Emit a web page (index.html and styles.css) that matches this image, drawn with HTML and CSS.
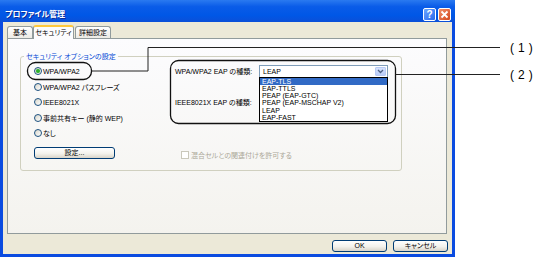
FILE: index.html
```html
<!DOCTYPE html>
<html lang="ja">

<head>
  <meta charset="UTF-8" />
  <title>プロファイル管理</title>
  <link rel="stylesheet" href="styles.css">
</head>

<body>
  <div class="window">
    <div class="titlebar">
      <span class="title">プロファイル管理</span>
      <div class="caption-buttons">
        <span class="cap-btn help">?</span>
        <span class="cap-btn close">
          <svg width="9" height="9" viewBox="0 0 9 9">
            <path d="M1.5 1.5 L7.5 7.5 M7.5 1.5 L1.5 7.5" stroke="#fff" stroke-width="1.8" />
          </svg>
        </span>
      </div>
    </div>

    <div class="client">
      <div class="tabs">
        <span class="tab tab-basic">基本</span>
        <span class="tab tab-security active">セキュリティ</span>
        <span class="tab tab-detail">詳細設定</span>
      </div>

      <div class="panel">
        <fieldset class="group">
          <legend>セキュリティ オプションの設定</legend>
          <div class="group-body">
            <div class="options">
              <label class="radio checked"><span class="radio-dot"></span>WPA/WPA2</label>
              <label class="radio"><span class="radio-dot"></span>WPA/WPA2 パスフレーズ</label>
              <label class="radio"><span class="radio-dot"></span>IEEE8021X</label>
              <label class="radio"><span class="radio-dot"></span>事前共有キー (静的 WEP)</label>
              <label class="radio"><span class="radio-dot"></span>なし</label>
              <button class="btn setting">設定...</button>
            </div>

            <div class="eap">
              <div class="eap-row">
                <span class="eap-label">WPA/WPA2 EAP の種類:</span>
                <div class="select">
                  <span>LEAP</span>
                  <span class="select-arrow">
                    <svg width="7" height="5" viewBox="0 0 7 5">
                      <path d="M1 1 L3.5 3.5 L6 1" fill="none" stroke="#4d6185" stroke-width="1.3" />
                    </svg>
                  </span>
                  <ul class="dropdown">
                    <li class="selected">EAP-TLS</li>
                    <li>EAP-TTLS</li>
                    <li>PEAP (EAP-GTC)</li>
                    <li>PEAP (EAP-MSCHAP V2)</li>
                    <li>LEAP</li>
                    <li>EAP-FAST</li>
                  </ul>
                </div>
              </div>
              <div class="eap-row second">
                <span class="eap-label">IEEE8021X EAP の種類:</span>
                <div class="select"></div>
              </div>
              <label class="check disabled"><span class="check-box"></span>混合セルとの関連付けを許可する</label>
            </div>
          </div>
        </fieldset>
      </div>

      <div class="footer">
        <button class="btn">OK</button>
        <button class="btn">キャンセル</button>
      </div>
    </div>
  </div>

  <svg class="callouts" width="546" height="262" viewBox="0 0 546 262">
    <rect x="27.5" y="62.5" width="64" height="17" rx="8" fill="none" stroke="#111" stroke-width="1.3" />
    <polyline points="91.5,71 148,71 148,47.5 500,47.5" fill="none" stroke="#222" stroke-width="1" />
    <rect x="170.5" y="60.5" width="225" height="63" rx="8" fill="none" stroke="#111" stroke-width="1.3" />
    <line x1="395.5" y1="74.5" x2="500" y2="74.5" stroke="#222" stroke-width="1" />
    <text class="callout-label" x="510" y="52">(1)</text>
    <text class="callout-label" x="510" y="79">(2)</text>
  </svg>
</body>

</html>
```

FILE: styles.css
```css
* {
  box-sizing: border-box;
}

body {
  margin: 0;
  background: #fff;
  font-family: "Liberation Sans", "Noto Sans CJK JP", sans-serif;
  font-size: 7px;
  font-feature-settings: "palt";
  color: #000;
}

.window {
  width: 455px;
  height: 257px;
  background: #0a4be0;
  padding-bottom: 3px;
  display: flex;
  flex-direction: column;
}

.titlebar {
  height: 22px;
  flex: none;
  display: flex;
  align-items: flex-start;
  justify-content: space-between;
  padding: 8px 4px 0 5px;
  background: linear-gradient(#2a7af0, #0a5ce8 30%, #0057e6 70%, #0b4fd8);
}

.title {
  color: #fff;
  font-size: 8px;
  font-weight: bold;
  line-height: 14px;
  text-shadow: 1px 1px 0 #0a2a9a;
}

.caption-buttons {
  display: flex;
  gap: 2px;
}

.cap-btn {
  width: 13px;
  height: 13px;
  border: 1px solid #fff;
  border-radius: 2px;
  display: flex;
  align-items: center;
  justify-content: center;
  color: #fff;
  font-size: 10px;
  font-weight: bold;
}

.help {
  background: linear-gradient(135deg, #6aa6ff, #2a68ee);
}

.close {
  background: linear-gradient(135deg, #f0906a, #d4471c);
}

/* client area */

.client {
  flex: 1;
  margin: 0 3px;
  background: #ece9d8;
  padding: 3px 4px 0 4px;
  display: flex;
  flex-direction: column;
}

.tabs {
  height: 13px;
  display: flex;
  align-items: flex-end;
}

.tab {
  height: 12px;
  border: 1px solid #919b9c;
  border-bottom: none;
  border-radius: 3px 3px 0 0;
  background: linear-gradient(#fff, #ecebe5);
  text-align: center;
  line-height: 11px;
}

.tab-basic {
  width: 26px;
}

.tab-security {
  width: 41px;
}

.tab-detail {
  width: 36px;
  margin-left: 1px;
}

.tab.active {
  height: 14px;
  margin-bottom: -1px;
  position: relative;
  z-index: 1;
  background: #fcfcfe;
  border-top: 2px solid #ffc83c;
  line-height: 12px;
}

.panel {
  height: 196px;
  margin-right: 1px;
  border: 1px solid #919b9c;
  background: linear-gradient(#fcfcfe, #f4f3ee);
  padding: 12.5px 0 0 12px;
}

.group {
  margin: 0;
  padding: 0;
  width: 382px;
  border: 1px solid #d0d0bf;
  border-radius: 3px;
}

.group legend {
  margin-left: 3px;
  padding: 0 2px;
  line-height: 9px;
  color: #0046d5;
}

.group-body {
  height: 109.5px;
  padding: 2.75px 0 0 13px;
  display: flex;
}

.options {
  width: 141px;
  display: flex;
  flex-direction: column;
  align-items: flex-start;
}

.radio {
  height: 15.5px;
  display: flex;
  align-items: center;
  white-space: nowrap;
}

.radio-dot {
  width: 8px;
  height: 8px;
  margin-right: 1px;
  border: 1px solid #1c5180;
  border-radius: 50%;
  background: linear-gradient(135deg, #d8d6cb, #fff);
  display: flex;
  align-items: center;
  justify-content: center;
}

.radio.checked .radio-dot::after {
  content: "";
  width: 4px;
  height: 4px;
  border-radius: 50%;
  background: #2cb02c;
  box-shadow: 0 0 1px #8ad88a;
}

.btn {
  font: inherit;
  font-feature-settings: "palt";
  height: 12px;
  width: 55px;
  padding: 0;
  border: 1px solid #003c74;
  border-radius: 3px;
  background: linear-gradient(#fff, #f3f2ec 55%, #d9d4c8);
  color: #000;
  line-height: 10px;
}

.setting {
  width: 81px;
  margin-top: 6.25px;
}

/* EAP column */

.eap {
  display: flex;
  flex-direction: column;
}

.eap-row {
  height: 15.5px;
  display: flex;
  align-items: center;
  white-space: nowrap;
}

.eap-row.second {
  margin-top: 15.5px;
}

.eap-label {
  width: 84px;
}

.select {
  position: relative;
  width: 129px;
  height: 13px;
  border: 1px solid #7f9db9;
  background: #fff;
  display: flex;
  align-items: center;
  padding-left: 3px;
}

.select-arrow {
  margin-left: auto;
  margin-right: 1px;
  width: 11px;
  height: 9px;
  border: 1px solid #b8caf5;
  border-radius: 1px;
  background: linear-gradient(#d6e2fd, #b9ccf8);
  display: flex;
  align-items: center;
  justify-content: center;
}

.dropdown {
  position: absolute;
  top: 100%;
  left: -1px;
  width: 129px;
  margin: 0;
  padding: 0;
  list-style: none;
  border: 1px solid #000;
  background: #fff;
  z-index: 2;
}

.dropdown li {
  height: 7.3px;
  line-height: 7.3px;
  padding-left: 2px;
  white-space: nowrap;
}

.dropdown li.selected {
  background: #316ac5;
  color: #fff;
}

.check {
  height: 15.5px;
  margin-top: 37.5px;
  padding-left: 6px;
  display: flex;
  align-items: center;
  white-space: nowrap;
}

.check.disabled {
  color: #aca899;
}

.check-box {
  width: 8px;
  height: 8px;
  margin-right: 2px;
  border: 1px solid #cac8bb;
  background: #fff;
}

.footer {
  margin-top: 6px;
  display: flex;
  justify-content: flex-end;
  gap: 6px;
}

/* annotations */

.callouts {
  position: absolute;
  top: 0;
  left: 0;
  pointer-events: none;
}

.callout-label {
  font-family: "Liberation Sans", sans-serif;
  font-size: 12px;
  letter-spacing: 4px;
  fill: #000;
}
```
